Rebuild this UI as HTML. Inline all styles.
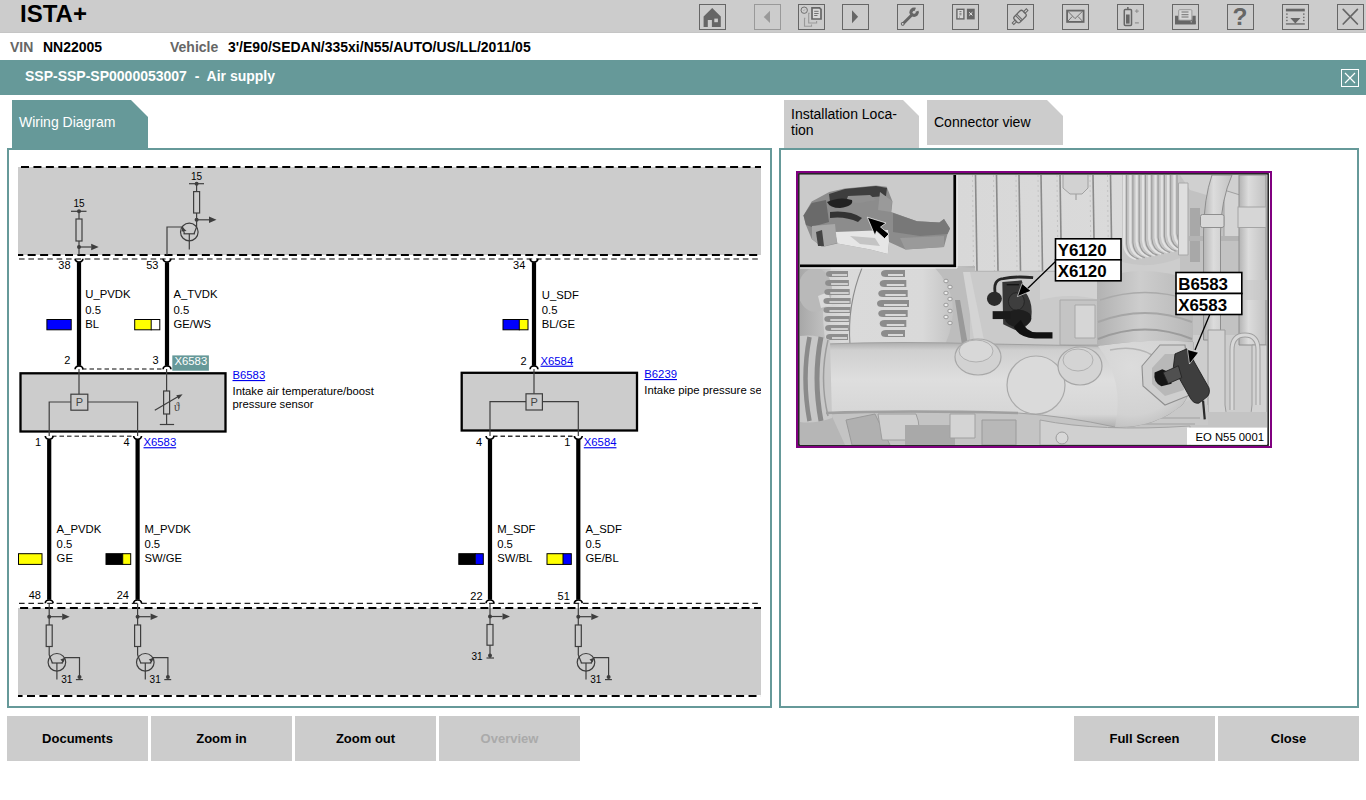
<!DOCTYPE html>
<html><head><meta charset="utf-8">
<style>
html,body{margin:0;padding:0;width:1366px;height:800px;overflow:hidden;background:#fff;font-family:"Liberation Sans",sans-serif;}
.a{position:absolute;white-space:nowrap;}
#hdr{left:0;top:0;width:1366px;height:33px;background:#cccccc;}
#logo{left:20px;top:2px;font:bold 24px/24px "Liberation Sans",sans-serif;color:#000;}
.ib{position:absolute;top:4px;width:25px;height:24px;border:1px solid #666;}
.ib svg{position:absolute;left:0;top:0;}
.vl{font:bold 14px/14px "Liberation Sans",sans-serif;color:#666;top:40px;}
.vv{font:bold 14px/14px "Liberation Sans",sans-serif;color:#000;top:40px;}
#teal{left:0;top:60px;width:1366px;height:35px;background:#669999;}
#ttl{left:25px;top:69px;font:bold 14px/14px "Liberation Sans",sans-serif;color:#fff;}
#cls{left:1341px;top:69px;width:16px;height:16px;border:1px solid #fff;}
.tab{position:absolute;font:14px/16px "Liberation Sans",sans-serif;}
.panel{position:absolute;border:2px solid #669999;background:#fff;}
.btn{position:absolute;top:716px;width:141px;height:45px;background:#cccccc;font:bold 13px/45px "Liberation Sans",sans-serif;text-align:center;color:#000;}
</style></head>
<body>
<div id="hdr" class="a"></div>
<div class="a" style="left:0;top:32px;width:1366px;height:1px;background:#c5c5c5"></div>
<div id="logo" class="a">ISTA+</div>
<svg class="a" style="left:699px;top:4px" width="27" height="26" viewBox="0 0 27 26"><rect x="0.5" y="0.5" width="26" height="25" fill="none" stroke="#666" stroke-width="1"/><path d="M13.2 4L21.8 12.5V23H12.9V16H8.8V23H4.6V12.5Z" fill="#666"/><rect x="15.3" y="14.6" width="3.6" height="3.6" fill="#cccccc"/></svg>
<svg class="a" style="left:754px;top:4px" width="27" height="26" viewBox="0 0 27 26"><rect x="0.5" y="0.5" width="26" height="25" fill="none" stroke="#999" stroke-width="1"/><path d="M9.8 12.9L16 6.8V19.1Z" fill="#999"/></svg>
<svg class="a" style="left:798px;top:4px" width="27" height="26" viewBox="0 0 27 26"><rect x="0.5" y="0.5" width="26" height="25" fill="none" stroke="#666" stroke-width="1"/><circle cx="6.2" cy="6.2" r="3.2" fill="none" stroke="#666" stroke-width="0.9"/>
<path d="M5.4 7L7 5.4" stroke="#999" stroke-width="0.8"/>
<path d="M14 3.8H21.5L23 5.3V15H14Z" fill="#d8d8d8" stroke="#666" stroke-width="1.7"/>
<path d="M16.2 7.3H20.6M16.2 9.5H20.6M16.2 11.5H19.5" stroke="#666" stroke-width="0.9"/>
<path d="M7.3 14.4H6.5V22.2H13.5V20.5" fill="none" stroke="#999" stroke-width="1.1"/>
<path d="M11.7 9.3H10.7V19H18.6V17" fill="none" stroke="#999" stroke-width="1.1"/></svg>
<svg class="a" style="left:842px;top:4px" width="27" height="26" viewBox="0 0 27 26"><rect x="0.5" y="0.5" width="26" height="25" fill="none" stroke="#666" stroke-width="1"/><path d="M10 6.2L16.1 12.8L10 19.3Z" fill="#666"/></svg>
<svg class="a" style="left:897px;top:4px" width="27" height="26" viewBox="0 0 27 26"><rect x="0.5" y="0.5" width="26" height="25" fill="none" stroke="#666" stroke-width="1"/><path d="M6 19.8L14.5 11.3" stroke="#666" stroke-width="3" stroke-linecap="round"/>
<circle cx="17.1" cy="8.3" r="4.7" fill="#666"/>
<path d="M17.1 8.3L19.3 3L22.6 6.3Z" fill="#cccccc"/><circle cx="17.1" cy="8.3" r="1.5" fill="#cccccc"/>
<circle cx="5.7" cy="19.8" r="1.9" fill="#666"/><circle cx="5.7" cy="19.8" r="0.9" fill="#ddd"/></svg>
<svg class="a" style="left:952px;top:4px" width="27" height="26" viewBox="0 0 27 26"><rect x="0.5" y="0.5" width="26" height="25" fill="none" stroke="#666" stroke-width="1"/><rect x="4.9" y="5.3" width="7" height="9.6" fill="#d8d8d8" stroke="#666" stroke-width="1.4"/>
<path d="M7.4 7.5H9.5M7.4 9.3H9.5M7.4 10.8H9.5" stroke="#666" stroke-width="0.8"/><circle cx="7.5" cy="13" r="0.5" fill="#666"/>
<rect x="14.9" y="4.7" width="7.8" height="10.7" fill="#666"/>
<path d="M17.2 8.3L20.4 11.4M20.4 8.3L17.2 11.4" stroke="#eee" stroke-width="1"/></svg>
<svg class="a" style="left:1007px;top:4px" width="27" height="26" viewBox="0 0 27 26"><rect x="0.5" y="0.5" width="26" height="25" fill="none" stroke="#666" stroke-width="1"/><g transform="rotate(-45 13 12.6)"><rect x="7" y="8.6" width="12" height="8" rx="2.2" fill="none" stroke="#666" stroke-width="1.3"/>
<path d="M10.6 8.6V16.6M12.4 8.6V16.6" stroke="#666" stroke-width="1"/>
<rect x="3" y="11.6" width="4" height="2.2" fill="none" stroke="#666" stroke-width="1"/>
<rect x="19" y="11.6" width="4" height="2.2" fill="none" stroke="#666" stroke-width="1"/></g></svg>
<svg class="a" style="left:1062px;top:4px" width="27" height="26" viewBox="0 0 27 26"><rect x="0.5" y="0.5" width="26" height="25" fill="none" stroke="#666" stroke-width="1"/><rect x="5.1" y="6.6" width="16.5" height="11.3" fill="none" stroke="#666" stroke-width="1.8"/>
<path d="M5.8 7.2L13 14.6L20.6 7.2M5.8 17.3L10.2 12.5M20.6 17.3L16 12.5" fill="none" stroke="#666" stroke-width="0.9"/></svg>
<svg class="a" style="left:1117px;top:4px" width="27" height="26" viewBox="0 0 27 26"><rect x="0.5" y="0.5" width="26" height="25" fill="none" stroke="#666" stroke-width="1"/><rect x="7.3" y="5.5" width="7.2" height="16" rx="1" fill="none" stroke="#666" stroke-width="1.5"/>
<rect x="10.1" y="3" width="1.5" height="2" fill="#666"/>
<rect x="9" y="10.5" width="3.6" height="9.1" fill="#666"/>
<path d="M17.9 7.1H21.8M19.85 5.2V9" stroke="#888" stroke-width="0.9"/>
<path d="M17.9 18.9H21.8" stroke="#888" stroke-width="1.1"/></svg>
<svg class="a" style="left:1172px;top:4px" width="27" height="26" viewBox="0 0 27 26"><rect x="0.5" y="0.5" width="26" height="25" fill="none" stroke="#666" stroke-width="1"/><path d="M3 11.8H6.4V18H20.3V11.8H23.7V20.3H3Z" fill="#666"/>
<rect x="6.3" y="13.5" width="14" height="4.5" fill="#666"/>
<rect x="6.7" y="5.7" width="13.2" height="10.5" rx="1" fill="#d8d8d8" stroke="#999" stroke-width="1"/>
<path d="M9.5 8H16.5M9.5 10.7H16.5M9.5 13H16.5" stroke="#666" stroke-width="0.9"/>
<rect x="3" y="16.8" width="20.7" height="3.5" fill="#666"/>
<circle cx="19.2" cy="17.8" r="0.6" fill="#ddd"/></svg>
<svg class="a" style="left:1227px;top:4px" width="27" height="26" viewBox="0 0 27 26"><rect x="0.5" y="0.5" width="26" height="25" fill="none" stroke="#666" stroke-width="1"/><text x="13" y="21.4" text-anchor="middle" font-family='"Liberation Sans",sans-serif' font-weight="bold" font-size="24.5" fill="#666">?</text></svg>
<svg class="a" style="left:1282px;top:4px" width="27" height="26" viewBox="0 0 27 26"><rect x="0.5" y="0.5" width="26" height="25" fill="none" stroke="#666" stroke-width="1"/><rect x="3.9" y="4.7" width="18.9" height="2.7" fill="#666"/>
<rect x="3.9" y="19.3" width="18.9" height="1.3" fill="#666"/>
<path d="M8.3 13.9H18.4L13.35 19.4Z" fill="#666"/>
<g fill="#666"><rect x="4.2" y="9.4" width="1.4" height="1.4"/><rect x="4.2" y="12.7" width="1.4" height="1.4"/><rect x="4.2" y="15.8" width="1.4" height="1.4"/>
<rect x="21.1" y="9.4" width="1.4" height="1.4"/><rect x="21.1" y="12.7" width="1.4" height="1.4"/><rect x="21.1" y="15.8" width="1.4" height="1.4"/></g></svg>
<svg class="a" style="left:1337px;top:4px" width="27" height="26" viewBox="0 0 27 26"><rect x="0.5" y="0.5" width="26" height="25" fill="none" stroke="#666" stroke-width="1"/><path d="M6.2 5.4L20.4 20M20.4 5.4L6.2 20" stroke="#666" stroke-width="1.7" stroke-linecap="round"/></svg>

<div class="a vl" style="left:10px">VIN</div>
<div class="a vv" style="left:43px">NN22005</div>
<div class="a vl" style="left:170px">Vehicle</div>
<div class="a vv" style="left:228px">3'/E90/SEDAN/335xi/N55/AUTO/US/LL/2011/05</div>

<div id="teal" class="a"></div>
<div id="ttl" class="a">SSP-SSP-SP0000053007&nbsp; -&nbsp; Air supply</div>
<div id="cls" class="a"><svg width="16" height="16"><path d="M3 3L13 13M13 3L3 13" stroke="#fff" stroke-width="1.2"/></svg></div>

<!-- tabs -->
<svg class="a" style="left:0;top:0" width="1366" height="150">
  <path d="M12 100H131L148 117V150H12Z" fill="#669999"/>
  <path d="M784 100H903L919 116V148H784Z" fill="#cccccc"/>
  <path d="M927 100H1047L1063 116V145H927Z" fill="#cccccc"/>
</svg>
<div class="a tab" style="left:19px;top:114px;color:#fff">Wiring Diagram</div>
<div class="a tab" style="left:791px;top:106px;color:#000">Installation Loca-<br>tion</div>
<div class="a tab" style="left:934px;top:114px;color:#000">Connector view</div>

<div class="panel" style="left:7px;top:148px;width:761px;height:556px"></div>
<div class="panel" style="left:779px;top:148px;width:576px;height:556px"></div>

<svg class="a" style="left:0;top:0" width="1366" height="800" viewBox="0 0 1366 800">
<defs><clipPath id="dc"><rect x="9" y="150" width="752" height="556"/></clipPath></defs>
<g clip-path="url(#dc)">
<rect x="18" y="167" width="743" height="88" fill="#cccccc"/>
<rect x="18" y="608" width="743" height="87" fill="#cccccc"/>
<line x1="18" y1="167" x2="761" y2="167" stroke="#000" stroke-width="2.1" stroke-dasharray="8 4.44" stroke-dashoffset="-3"/>
<line x1="18" y1="255" x2="761" y2="255" stroke="#000" stroke-width="2.1" stroke-dasharray="8 4.44" stroke-dashoffset="2.76"/>
<line x1="18" y1="608" x2="761" y2="608" stroke="#000" stroke-width="2.1" stroke-dasharray="8 4.44" stroke-dashoffset="-2.1"/>
<line x1="18" y1="696" x2="761" y2="696" stroke="#000" stroke-width="2.1" stroke-dasharray="8 4.44" stroke-dashoffset="3.44"/>
<line x1="19" y1="259" x2="761" y2="259" stroke="#5a5a5a" stroke-width="1.6" stroke-dasharray="5.6 3.8"/>
<line x1="19" y1="603.3" x2="761" y2="603.3" stroke="#222" stroke-width="1.3" stroke-dasharray="5.6 3.8"/>
<line x1="82" y1="369" x2="164" y2="369" stroke="#5a5a5a" stroke-width="1.5" stroke-dasharray="4.5 3"/>
<line x1="52" y1="436.2" x2="134.5" y2="436.2" stroke="#5a5a5a" stroke-width="1.5" stroke-dasharray="4.5 3"/>
<line x1="493" y1="436.2" x2="575" y2="436.2" stroke="#333" stroke-width="1.5" stroke-dasharray="4.5 3"/>
<line x1="79" y1="262.3" x2="79" y2="365.6" stroke="#000" stroke-width="4.2"/>
<path d="M75.1 258.8 A3.9 3.3 0 0 0 82.9 258.8" fill="none" stroke="#000" stroke-width="1.7"/>
<path d="M75.1 369.2 A3.9 3.3 0 0 1 82.9 369.2" fill="none" stroke="#000" stroke-width="1.7"/>
<line x1="167" y1="262.3" x2="167" y2="365.6" stroke="#000" stroke-width="4.2"/>
<path d="M163.1 258.8 A3.9 3.3 0 0 0 170.9 258.8" fill="none" stroke="#000" stroke-width="1.7"/>
<path d="M163.1 369.2 A3.9 3.3 0 0 1 170.9 369.2" fill="none" stroke="#000" stroke-width="1.7"/>
<line x1="534" y1="262.3" x2="534" y2="365.6" stroke="#000" stroke-width="4.2"/>
<path d="M530.1 258.8 A3.9 3.3 0 0 0 537.9 258.8" fill="none" stroke="#000" stroke-width="1.7"/>
<path d="M530.1 369.2 A3.9 3.3 0 0 1 537.9 369.2" fill="none" stroke="#000" stroke-width="1.7"/>
<line x1="49.2" y1="439.5" x2="49.2" y2="599.7" stroke="#000" stroke-width="4.2"/>
<path d="M45.300000000000004 436 A3.9 3.3 0 0 0 53.1 436" fill="none" stroke="#000" stroke-width="1.7"/>
<path d="M45.300000000000004 603.3 A3.9 3.3 0 0 1 53.1 603.3" fill="none" stroke="#000" stroke-width="1.7"/>
<line x1="137.6" y1="439.5" x2="137.6" y2="599.7" stroke="#000" stroke-width="4.2"/>
<path d="M133.7 436 A3.9 3.3 0 0 0 141.5 436" fill="none" stroke="#000" stroke-width="1.7"/>
<path d="M133.7 603.3 A3.9 3.3 0 0 1 141.5 603.3" fill="none" stroke="#000" stroke-width="1.7"/>
<line x1="490" y1="439.5" x2="490" y2="599.7" stroke="#000" stroke-width="4.2"/>
<path d="M486.1 436 A3.9 3.3 0 0 0 493.9 436" fill="none" stroke="#000" stroke-width="1.7"/>
<path d="M486.1 603.3 A3.9 3.3 0 0 1 493.9 603.3" fill="none" stroke="#000" stroke-width="1.7"/>
<line x1="578.3" y1="439.5" x2="578.3" y2="599.7" stroke="#000" stroke-width="4.2"/>
<path d="M574.4 436 A3.9 3.3 0 0 0 582.1999999999999 436" fill="none" stroke="#000" stroke-width="1.7"/>
<path d="M574.4 603.3 A3.9 3.3 0 0 1 582.1999999999999 603.3" fill="none" stroke="#000" stroke-width="1.7"/>
<text x="79" y="207" font-family='"Liberation Sans",sans-serif' font-size="10" text-anchor="middle" fill="#000" >15</text>
<line x1="71" y1="211.3" x2="86.5" y2="211.3" stroke="#3e3e3e" stroke-width="1.2"/>
<circle cx="79" cy="211.3" r="2" fill="#3e3e3e"/>
<line x1="79" y1="211.3" x2="79" y2="255" stroke="#3e3e3e" stroke-width="1.2"/>
<rect x="76.0" y="219" width="6" height="22" fill="#cccccc" stroke="#3e3e3e" stroke-width="1.2"/>
<circle cx="79" cy="247" r="2" fill="#3e3e3e"/>
<line x1="79" y1="247" x2="91.2" y2="247" stroke="#3e3e3e" stroke-width="1.2"/>
<path d="M91.2 243.8L98.7 247L91.2 250.2Z" fill="#3e3e3e"/>
<text x="196.6" y="180" font-family='"Liberation Sans",sans-serif' font-size="10" text-anchor="middle" fill="#000" >15</text>
<line x1="189" y1="183.7" x2="204" y2="183.7" stroke="#3e3e3e" stroke-width="1.2"/>
<circle cx="196.6" cy="183.7" r="2" fill="#3e3e3e"/>
<line x1="196.6" y1="183.7" x2="196.6" y2="227" stroke="#3e3e3e" stroke-width="1.2"/>
<rect x="193.6" y="191.6" width="6" height="21.400000000000006" fill="#cccccc" stroke="#3e3e3e" stroke-width="1.2"/>
<circle cx="196.6" cy="219.8" r="2" fill="#3e3e3e"/>
<line x1="196.6" y1="219.8" x2="209.0" y2="219.8" stroke="#3e3e3e" stroke-width="1.2"/>
<path d="M209.0 216.60000000000002L216.5 219.8L209.0 223.0Z" fill="#3e3e3e"/>
<circle cx="189.3" cy="232" r="8.8" fill="none" stroke="#3e3e3e" stroke-width="1.2"/>
<line x1="183.5" y1="233.8" x2="195" y2="233.8" stroke="#3e3e3e" stroke-width="1.2"/>
<line x1="189.3" y1="233.8" x2="189.3" y2="249.6" stroke="#3e3e3e" stroke-width="1.2"/>
<path d="M194 233.8L196.6 227" fill="none" stroke="#3e3e3e" stroke-width="1.2"/>
<path d="M184.5 233.8L182.5 227L167 227L167 255" fill="none" stroke="#3e3e3e" stroke-width="1.2"/>
<path d="M186.5 231 L182.5 227 L181.5 231.5Z" fill="#3e3e3e"/>
<text x="70.6" y="269" font-family='"Liberation Sans",sans-serif' font-size="11" text-anchor="end" fill="#000" >38</text>
<text x="158.5" y="269" font-family='"Liberation Sans",sans-serif' font-size="11" text-anchor="end" fill="#000" >53</text>
<text x="525.3" y="269" font-family='"Liberation Sans",sans-serif' font-size="11" text-anchor="end" fill="#000" >34</text>
<text x="85.3" y="298" font-family='"Liberation Sans",sans-serif' font-size="11.3" text-anchor="start" fill="#000" >U_PVDK</text>
<text x="85.3" y="313.6" font-family='"Liberation Sans",sans-serif' font-size="11.3" text-anchor="start" fill="#000" >0.5</text>
<text x="85.3" y="328.3" font-family='"Liberation Sans",sans-serif' font-size="11.3" text-anchor="start" fill="#000" >BL</text>
<text x="173.5" y="298" font-family='"Liberation Sans",sans-serif' font-size="11.3" text-anchor="start" fill="#000" >A_TVDK</text>
<text x="173.5" y="313.6" font-family='"Liberation Sans",sans-serif' font-size="11.3" text-anchor="start" fill="#000" >0.5</text>
<text x="173.5" y="328.3" font-family='"Liberation Sans",sans-serif' font-size="11.3" text-anchor="start" fill="#000" >GE/WS</text>
<text x="541.8" y="299" font-family='"Liberation Sans",sans-serif' font-size="11.3" text-anchor="start" fill="#000" >U_SDF</text>
<text x="541.8" y="313.6" font-family='"Liberation Sans",sans-serif' font-size="11.3" text-anchor="start" fill="#000" >0.5</text>
<text x="541.8" y="328.3" font-family='"Liberation Sans",sans-serif' font-size="11.3" text-anchor="start" fill="#000" >BL/GE</text>
<text x="56.6" y="532.7" font-family='"Liberation Sans",sans-serif' font-size="11.3" text-anchor="start" fill="#000" >A_PVDK</text>
<text x="56.6" y="547.8" font-family='"Liberation Sans",sans-serif' font-size="11.3" text-anchor="start" fill="#000" >0.5</text>
<text x="56.6" y="562.4" font-family='"Liberation Sans",sans-serif' font-size="11.3" text-anchor="start" fill="#000" >GE</text>
<text x="144.4" y="532.7" font-family='"Liberation Sans",sans-serif' font-size="11.3" text-anchor="start" fill="#000" >M_PVDK</text>
<text x="144.4" y="547.8" font-family='"Liberation Sans",sans-serif' font-size="11.3" text-anchor="start" fill="#000" >0.5</text>
<text x="144.4" y="562.4" font-family='"Liberation Sans",sans-serif' font-size="11.3" text-anchor="start" fill="#000" >SW/GE</text>
<text x="497.2" y="533.2" font-family='"Liberation Sans",sans-serif' font-size="11.3" text-anchor="start" fill="#000" >M_SDF</text>
<text x="497.2" y="547.8" font-family='"Liberation Sans",sans-serif' font-size="11.3" text-anchor="start" fill="#000" >0.5</text>
<text x="497.2" y="562.4" font-family='"Liberation Sans",sans-serif' font-size="11.3" text-anchor="start" fill="#000" >SW/BL</text>
<text x="585.4" y="533.2" font-family='"Liberation Sans",sans-serif' font-size="11.3" text-anchor="start" fill="#000" >A_SDF</text>
<text x="585.4" y="547.8" font-family='"Liberation Sans",sans-serif' font-size="11.3" text-anchor="start" fill="#000" >0.5</text>
<text x="585.4" y="562.4" font-family='"Liberation Sans",sans-serif' font-size="11.3" text-anchor="start" fill="#000" >GE/BL</text>
<rect x="46.9" y="319.5" width="24.300000000000004" height="10.300000000000011" fill="#0000ff" stroke="#000" stroke-width="1"/>
<rect x="134.7" y="319.5" width="16.5" height="10.300000000000011" fill="#ffff00"/>
<rect x="151.2" y="319.5" width="8.600000000000023" height="10.300000000000011" fill="#ffffff"/>
<rect x="134.7" y="319.5" width="25.100000000000023" height="10.300000000000011" fill="none" stroke="#000" stroke-width="1"/>
<line x1="151.2" y1="319" x2="151.2" y2="330.3" stroke="#000" stroke-width="1"/>
<rect x="503.0" y="319.5" width="16.299999999999955" height="10.300000000000011" fill="#0000ff"/>
<rect x="519.3" y="319.5" width="8.700000000000045" height="10.300000000000011" fill="#ffff00"/>
<rect x="503.0" y="319.5" width="25.0" height="10.300000000000011" fill="none" stroke="#000" stroke-width="1"/>
<line x1="519.3" y1="319" x2="519.3" y2="330.3" stroke="#000" stroke-width="1"/>
<rect x="18.5" y="553.7" width="23.5" height="10.699999999999932" fill="#ffff00" stroke="#000" stroke-width="1"/>
<rect x="106.0" y="553.7" width="16.700000000000003" height="10.699999999999932" fill="#000000"/>
<rect x="122.7" y="553.7" width="7.999999999999986" height="10.699999999999932" fill="#ffff00"/>
<rect x="106.0" y="553.7" width="24.69999999999999" height="10.699999999999932" fill="none" stroke="#000" stroke-width="1"/>
<line x1="122.7" y1="553.2" x2="122.7" y2="564.9" stroke="#000" stroke-width="1"/>
<rect x="458.8" y="553.7" width="16.5" height="10.699999999999932" fill="#000000"/>
<rect x="475.3" y="553.7" width="8.0" height="10.699999999999932" fill="#0000ff"/>
<rect x="458.8" y="553.7" width="24.5" height="10.699999999999932" fill="none" stroke="#000" stroke-width="1"/>
<line x1="475.3" y1="553.2" x2="475.3" y2="564.9" stroke="#000" stroke-width="1"/>
<rect x="547.0" y="553.7" width="16.0" height="10.699999999999932" fill="#ffff00"/>
<rect x="563" y="553.7" width="8.299999999999955" height="10.699999999999932" fill="#0000ff"/>
<rect x="547.0" y="553.7" width="24.299999999999955" height="10.699999999999932" fill="none" stroke="#000" stroke-width="1"/>
<line x1="563" y1="553.2" x2="563" y2="564.9" stroke="#000" stroke-width="1"/>
<text x="70.3" y="364.4" font-family='"Liberation Sans",sans-serif' font-size="11" text-anchor="end" fill="#000" >2</text>
<text x="158.5" y="364.4" font-family='"Liberation Sans",sans-serif' font-size="11" text-anchor="end" fill="#000" >3</text>
<rect x="172.3" y="355.4" width="36.6" height="15.3" fill="#669999"/>
<text x="174.5" y="364.8" font-family='"Liberation Sans",sans-serif' font-size="11.3" text-anchor="start" fill="#fff" >X6583</text>
<text x="526.6" y="364.7" font-family='"Liberation Sans",sans-serif' font-size="11" text-anchor="end" fill="#000" >2</text>
<text x="540.5" y="364.7" font-family='"Liberation Sans",sans-serif' font-size="11.3" text-anchor="start" fill="#0000ee" text-decoration="underline">X6584</text>
<text x="41" y="446.2" font-family='"Liberation Sans",sans-serif' font-size="11" text-anchor="end" fill="#000" >1</text>
<text x="129.5" y="446.2" font-family='"Liberation Sans",sans-serif' font-size="11" text-anchor="end" fill="#000" >4</text>
<text x="143.5" y="446.2" font-family='"Liberation Sans",sans-serif' font-size="11.3" text-anchor="start" fill="#0000ee" text-decoration="underline">X6583</text>
<text x="482" y="446.2" font-family='"Liberation Sans",sans-serif' font-size="11" text-anchor="end" fill="#000" >4</text>
<text x="570.4" y="446.2" font-family='"Liberation Sans",sans-serif' font-size="11" text-anchor="end" fill="#000" >1</text>
<text x="583.8" y="446.2" font-family='"Liberation Sans",sans-serif' font-size="11.3" text-anchor="start" fill="#0000ee" text-decoration="underline">X6584</text>
<text x="41" y="599" font-family='"Liberation Sans",sans-serif' font-size="11" text-anchor="end" fill="#000" >48</text>
<text x="129" y="599" font-family='"Liberation Sans",sans-serif' font-size="11" text-anchor="end" fill="#000" >24</text>
<text x="482.6" y="599.5" font-family='"Liberation Sans",sans-serif' font-size="11" text-anchor="end" fill="#000" >22</text>
<text x="569.8" y="599.5" font-family='"Liberation Sans",sans-serif' font-size="11" text-anchor="end" fill="#000" >51</text>
<rect x="20.5" y="373.3" width="205" height="58.2" fill="#cccccc" stroke="#000" stroke-width="2.3"/>
<rect x="461.7" y="372.8" width="175.3" height="57.7" fill="#cccccc" stroke="#000" stroke-width="2.3"/>
<text x="232.5" y="379" font-family='"Liberation Sans",sans-serif' font-size="11.3" text-anchor="start" fill="#0000ee" text-decoration="underline">B6583</text>
<text x="232.5" y="394.8" font-family='"Liberation Sans",sans-serif' font-size="11.3" text-anchor="start" fill="#000" >Intake air temperature/boost</text>
<text x="232.5" y="408.2" font-family='"Liberation Sans",sans-serif' font-size="11.3" text-anchor="start" fill="#000" >pressure sensor</text>
<text x="644.3" y="378" font-family='"Liberation Sans",sans-serif' font-size="11.3" text-anchor="start" fill="#0000ee" text-decoration="underline">B6239</text>
<text x="644.3" y="393.6" font-family='"Liberation Sans",sans-serif' font-size="11.3" text-anchor="start" fill="#000" >Intake pipe pressure sensor</text>
<line x1="79" y1="369" x2="79" y2="394.2" stroke="#3e3e3e" stroke-width="1.2"/>
<path d="M71 402H49.2V436" fill="none" stroke="#3e3e3e" stroke-width="1.2"/>
<path d="M87.8 402H137.6V436" fill="none" stroke="#3e3e3e" stroke-width="1.2"/>
<rect x="70.9" y="394.2" width="16.89999999999999" height="16.0" fill="#cccccc" stroke="#3e3e3e" stroke-width="1.2"/>
<text x="79.35" y="406.2" font-family='"Liberation Sans",sans-serif' font-size="11" text-anchor="middle" fill="#444" >P</text>
<line x1="166.6" y1="369" x2="166.6" y2="391" stroke="#3e3e3e" stroke-width="1.2"/>
<rect x="163.6" y="391" width="6" height="23" fill="#cccccc" stroke="#3e3e3e" stroke-width="1.2"/>
<line x1="166.6" y1="414" x2="166.6" y2="424.5" stroke="#3e3e3e" stroke-width="1.2"/>
<line x1="159.8" y1="424.5" x2="174.1" y2="424.5" stroke="#3e3e3e" stroke-width="1.2"/>
<line x1="154.8" y1="410.2" x2="180" y2="395.5" stroke="#3e3e3e" stroke-width="1.2"/>
<path d="M182.6 394.2L176.3 395.3L178.6 399.2Z" fill="#3e3e3e"/>
<text x="174" y="411" font-family="Liberation Serif,serif" font-size="11.5" fill="#3e3e3e">&#977;</text>
<line x1="534" y1="369" x2="534" y2="393.8" stroke="#3e3e3e" stroke-width="1.2"/>
<path d="M526 401.7H490V436" fill="none" stroke="#3e3e3e" stroke-width="1.2"/>
<path d="M542.4 401.7H578.3V436" fill="none" stroke="#3e3e3e" stroke-width="1.2"/>
<rect x="526" y="393.8" width="16.399999999999977" height="16.19999999999999" fill="#cccccc" stroke="#3e3e3e" stroke-width="1.2"/>
<text x="534.2" y="406" font-family='"Liberation Sans",sans-serif' font-size="11" text-anchor="middle" fill="#444" >P</text>
<line x1="49.2" y1="603.5" x2="49.2" y2="655" stroke="#3e3e3e" stroke-width="1.2"/>
<circle cx="49.2" cy="616.7" r="2" fill="#3e3e3e"/>
<line x1="49.2" y1="616.7" x2="62.2" y2="616.7" stroke="#3e3e3e" stroke-width="1.2"/>
<path d="M62.2 613.5L69.7 616.7L62.2 619.9000000000001Z" fill="#3e3e3e"/>
<rect x="46.2" y="625" width="6" height="21.5" fill="#cccccc" stroke="#3e3e3e" stroke-width="1.2"/>
<circle cx="56.900000000000006" cy="662.3" r="8.8" fill="none" stroke="#3e3e3e" stroke-width="1.2"/>
<line x1="51.7" y1="663" x2="62.900000000000006" y2="663" stroke="#3e3e3e" stroke-width="1.2"/>
<line x1="56.900000000000006" y1="663" x2="56.900000000000006" y2="679.6" stroke="#3e3e3e" stroke-width="1.2"/>
<path d="M52.400000000000006 663L49.2 655" fill="none" stroke="#3e3e3e" stroke-width="1.2"/>
<path d="M61.900000000000006 663L64.9 657.7H79.5V677" fill="none" stroke="#3e3e3e" stroke-width="1.2"/>
<path d="M64.9 657.7L60.400000000000006 659.5L63.400000000000006 662.5Z" fill="#3e3e3e"/>
<circle cx="79.5" cy="677" r="2" fill="#3e3e3e"/>
<line x1="75.9" y1="679.6" x2="82.80000000000001" y2="679.6" stroke="#3e3e3e" stroke-width="1.2"/>
<text x="61.2" y="682.6" font-family='"Liberation Sans",sans-serif' font-size="10" text-anchor="start" fill="#000" >31</text>
<line x1="137.6" y1="603.5" x2="137.6" y2="655" stroke="#3e3e3e" stroke-width="1.2"/>
<circle cx="137.6" cy="616.7" r="2" fill="#3e3e3e"/>
<line x1="137.6" y1="616.7" x2="150.6" y2="616.7" stroke="#3e3e3e" stroke-width="1.2"/>
<path d="M150.6 613.5L158.1 616.7L150.6 619.9000000000001Z" fill="#3e3e3e"/>
<rect x="134.6" y="625" width="6" height="21.5" fill="#cccccc" stroke="#3e3e3e" stroke-width="1.2"/>
<circle cx="145.29999999999998" cy="662.3" r="8.8" fill="none" stroke="#3e3e3e" stroke-width="1.2"/>
<line x1="140.1" y1="663" x2="151.29999999999998" y2="663" stroke="#3e3e3e" stroke-width="1.2"/>
<line x1="145.29999999999998" y1="663" x2="145.29999999999998" y2="679.6" stroke="#3e3e3e" stroke-width="1.2"/>
<path d="M140.79999999999998 663L137.6 655" fill="none" stroke="#3e3e3e" stroke-width="1.2"/>
<path d="M150.29999999999998 663L153.29999999999998 657.7H167.9V677" fill="none" stroke="#3e3e3e" stroke-width="1.2"/>
<path d="M153.29999999999998 657.7L148.79999999999998 659.5L151.79999999999998 662.5Z" fill="#3e3e3e"/>
<circle cx="167.9" cy="677" r="2" fill="#3e3e3e"/>
<line x1="164.29999999999998" y1="679.6" x2="171.2" y2="679.6" stroke="#3e3e3e" stroke-width="1.2"/>
<text x="149.6" y="682.6" font-family='"Liberation Sans",sans-serif' font-size="10" text-anchor="start" fill="#000" >31</text>
<line x1="578.3" y1="603.5" x2="578.3" y2="655" stroke="#3e3e3e" stroke-width="1.2"/>
<circle cx="578.3" cy="616.7" r="2" fill="#3e3e3e"/>
<line x1="578.3" y1="616.7" x2="591.3" y2="616.7" stroke="#3e3e3e" stroke-width="1.2"/>
<path d="M591.3 613.5L598.8 616.7L591.3 619.9000000000001Z" fill="#3e3e3e"/>
<rect x="575.3" y="625" width="6" height="21.5" fill="#cccccc" stroke="#3e3e3e" stroke-width="1.2"/>
<circle cx="586.0" cy="662.3" r="8.8" fill="none" stroke="#3e3e3e" stroke-width="1.2"/>
<line x1="580.8" y1="663" x2="592.0" y2="663" stroke="#3e3e3e" stroke-width="1.2"/>
<line x1="586.0" y1="663" x2="586.0" y2="679.6" stroke="#3e3e3e" stroke-width="1.2"/>
<path d="M581.5 663L578.3 655" fill="none" stroke="#3e3e3e" stroke-width="1.2"/>
<path d="M591.0 663L594.0 657.7H608.5999999999999V677" fill="none" stroke="#3e3e3e" stroke-width="1.2"/>
<path d="M594.0 657.7L589.5 659.5L592.5 662.5Z" fill="#3e3e3e"/>
<circle cx="608.5999999999999" cy="677" r="2" fill="#3e3e3e"/>
<line x1="605.0" y1="679.6" x2="611.9" y2="679.6" stroke="#3e3e3e" stroke-width="1.2"/>
<text x="590.3" y="682.6" font-family='"Liberation Sans",sans-serif' font-size="10" text-anchor="start" fill="#000" >31</text>
<line x1="490" y1="603.5" x2="490" y2="658" stroke="#3e3e3e" stroke-width="1.2"/>
<circle cx="490" cy="616.5" r="2" fill="#3e3e3e"/>
<line x1="490" y1="616.5" x2="502.5" y2="616.5" stroke="#3e3e3e" stroke-width="1.2"/>
<path d="M502.5 613.3L510 616.5L502.5 619.7Z" fill="#3e3e3e"/>
<rect x="487.0" y="624.5" width="6" height="20.700000000000045" fill="#cccccc" stroke="#3e3e3e" stroke-width="1.2"/>
<circle cx="490" cy="655.4" r="2" fill="#3e3e3e"/>
<line x1="486.5" y1="658" x2="494" y2="658" stroke="#3e3e3e" stroke-width="1.2"/>
<text x="482.6" y="659.5" font-family='"Liberation Sans",sans-serif' font-size="10" text-anchor="end" fill="#000" >31</text>
</g></svg>
<svg class="a" style="left:0;top:0" width="1366" height="800" viewBox="0 0 1366 800">
<defs>
<clipPath id="pc"><rect x="800" y="175" width="467" height="270"/></clipPath>
<linearGradient id="pipeg" x1="0" y1="0" x2="0" y2="1">
 <stop offset="0" stop-color="#a9a9a9"/><stop offset="0.1" stop-color="#cfcfcf"/>
 <stop offset="0.45" stop-color="#dedede"/><stop offset="0.85" stop-color="#d6d6d6"/><stop offset="1" stop-color="#b0b0b0"/>
</linearGradient>
<radialGradient id="elbowg" cx="0.35" cy="0.3" r="0.8">
 <stop offset="0" stop-color="#dcdcdc"/><stop offset="0.7" stop-color="#d2d2d2"/><stop offset="1" stop-color="#bababa"/>
</radialGradient>
<linearGradient id="neckg" x1="0" y1="0" x2="1" y2="0">
 <stop offset="0" stop-color="#b2b2b2"/><stop offset="0.45" stop-color="#cdcdcd"/><stop offset="1" stop-color="#b8b8b8"/>
</linearGradient>
<linearGradient id="altg" x1="0" y1="0" x2="1" y2="0">
 <stop offset="0" stop-color="#c8c8c8"/><stop offset="0.25" stop-color="#dadada"/><stop offset="0.7" stop-color="#d9d9d9"/><stop offset="1" stop-color="#b4b4b4"/>
</linearGradient>
<linearGradient id="hoseg" x1="0" y1="0" x2="1" y2="0">
 <stop offset="0" stop-color="#b4b4b4"/><stop offset="0.35" stop-color="#dcdcdc"/><stop offset="1" stop-color="#c2c2c2"/>
</linearGradient>
<linearGradient id="ribg" x1="0" y1="0" x2="1" y2="0">
 <stop offset="0" stop-color="#d8d8d8"/><stop offset="1" stop-color="#dadada"/>
</linearGradient>
<linearGradient id="altl" x1="0" y1="0" x2="1" y2="0">
 <stop offset="0" stop-color="#a8a8a8"/><stop offset="1" stop-color="#c8c8c8"/>
</linearGradient>
</defs>
<rect x="797" y="172" width="474" height="275" fill="none" stroke="#800080" stroke-width="2"/>
<rect x="798.8" y="173.8" width="469.4" height="271.4" fill="#d0d0d0" stroke="#111" stroke-width="1.4"/>
<g clip-path="url(#pc)">
<rect x="800" y="175" width="467" height="270" fill="#cdcdcd"/>
<rect x="954" y="175" width="172" height="97" fill="url(#ribg)"/>
<line x1="975.5" y1="175" x2="977.0" y2="271" stroke="#8a8a8a" stroke-width="1.6"/>
<line x1="972.5" y1="175" x2="973.5" y2="271" stroke="#c4c4c4" stroke-width="1" stroke-dasharray="2 3"/>
<line x1="996.5" y1="175" x2="998.0" y2="271" stroke="#8a8a8a" stroke-width="1.6"/>
<line x1="993.5" y1="175" x2="994.5" y2="271" stroke="#c4c4c4" stroke-width="1" stroke-dasharray="2 3"/>
<line x1="1019" y1="175" x2="1020.5" y2="271" stroke="#8a8a8a" stroke-width="1.6"/>
<line x1="1016" y1="175" x2="1017" y2="271" stroke="#c4c4c4" stroke-width="1" stroke-dasharray="2 3"/>
<line x1="1041" y1="175" x2="1042.5" y2="271" stroke="#8a8a8a" stroke-width="1.6"/>
<line x1="1038" y1="175" x2="1039" y2="271" stroke="#c4c4c4" stroke-width="1" stroke-dasharray="2 3"/>
<line x1="1060" y1="175" x2="1061.5" y2="271" stroke="#8a8a8a" stroke-width="1.6"/>
<line x1="1057" y1="175" x2="1058" y2="271" stroke="#c4c4c4" stroke-width="1" stroke-dasharray="2 3"/>
<line x1="1093" y1="175" x2="1094.5" y2="271" stroke="#8a8a8a" stroke-width="1.6"/>
<line x1="1090" y1="175" x2="1091" y2="271" stroke="#c4c4c4" stroke-width="1" stroke-dasharray="2 3"/>
<line x1="1110.5" y1="175" x2="1112.0" y2="271" stroke="#8a8a8a" stroke-width="1.6"/>
<line x1="1107.5" y1="175" x2="1108.5" y2="271" stroke="#c4c4c4" stroke-width="1" stroke-dasharray="2 3"/>
<line x1="954" y1="271.5" x2="1126" y2="271.5" stroke="#b8b8b8" stroke-width="1.5"/>
<path d="M1063 175V188L1070 194H1082L1088 188V175" fill="#d2d2d2" stroke="#a0a0a0" stroke-width="1"/>
<line x1="1076" y1="194" x2="1076" y2="200" stroke="#a0a0a0" stroke-width="1.2"/>
<rect x="1122" y="175" width="58" height="92" fill="#c6c6c6"/>
<path d="M1124.0 175V244.0Q1125.0 256.0 1136.0 259.0" fill="none" stroke="#e2e2e2" stroke-width="2.2"/>
<path d="M1126.6 175V244.0Q1127.6 256.0 1138.6 259.0" fill="none" stroke="#9a9a9a" stroke-width="1.1"/>
<path d="M1130.3 175V242.7Q1131.3 254.7 1142.3 257.7" fill="none" stroke="#e2e2e2" stroke-width="2.2"/>
<path d="M1132.9 175V242.7Q1133.9 254.7 1144.9 257.7" fill="none" stroke="#9a9a9a" stroke-width="1.1"/>
<path d="M1136.6 175V241.4Q1137.6 253.4 1148.6 256.4" fill="none" stroke="#e2e2e2" stroke-width="2.2"/>
<path d="M1139.2 175V241.4Q1140.2 253.4 1151.2 256.4" fill="none" stroke="#9a9a9a" stroke-width="1.1"/>
<path d="M1142.9 175V240.1Q1143.9 252.1 1154.9 255.1" fill="none" stroke="#e2e2e2" stroke-width="2.2"/>
<path d="M1145.5 175V240.1Q1146.5 252.1 1157.5 255.1" fill="none" stroke="#9a9a9a" stroke-width="1.1"/>
<path d="M1149.2 175V238.8Q1150.2 250.8 1161.2 253.8" fill="none" stroke="#e2e2e2" stroke-width="2.2"/>
<path d="M1151.8 175V238.8Q1152.8 250.8 1163.8 253.8" fill="none" stroke="#9a9a9a" stroke-width="1.1"/>
<path d="M1155.5 175V237.5Q1156.5 249.5 1167.5 252.5" fill="none" stroke="#e2e2e2" stroke-width="2.2"/>
<path d="M1158.1 175V237.5Q1159.1 249.5 1170.1 252.5" fill="none" stroke="#9a9a9a" stroke-width="1.1"/>
<path d="M1161.8 175V236.2Q1162.8 248.2 1173.8 251.2" fill="none" stroke="#e2e2e2" stroke-width="2.2"/>
<path d="M1164.4 175V236.2Q1165.4 248.2 1176.4 251.2" fill="none" stroke="#9a9a9a" stroke-width="1.1"/>
<path d="M1168.1 175V234.9Q1169.1 246.9 1180.1 249.9" fill="none" stroke="#e2e2e2" stroke-width="2.2"/>
<path d="M1170.7 175V234.9Q1171.7 246.9 1182.7 249.9" fill="none" stroke="#9a9a9a" stroke-width="1.1"/>
<path d="M1174.4 175V233.6Q1175.4 245.6 1186.4 248.6" fill="none" stroke="#e2e2e2" stroke-width="2.2"/>
<path d="M1177.0 175V233.6Q1178.0 245.6 1189.0 248.6" fill="none" stroke="#9a9a9a" stroke-width="1.1"/>
<path d="M1122 262Q1150 270 1180 258V275H1122Z" fill="#cdcdcd"/>
<rect x="1180" y="175" width="87" height="160" fill="#c2c2c2"/>
<path d="M1180 175H1267V200L1240 205L1190 190Z" fill="#d0d0d0"/>
<path d="M1178.5 183H1188V255H1178.5Z" fill="#dedede" stroke="#a8a8a8" stroke-width="1"/>
<path d="M1190 208H1200V262H1190Z" fill="#a8a8a8"/>
<path d="M1224 190L1240 195V240H1224Z" fill="#d4d4d4" stroke="#a0a0a0" stroke-width="1"/>
<path d="M1188 236H1240V241H1188Z" fill="#b4b4b4"/>
<path d="M1203.5 340V232Q1204 198 1212 175H1232Q1221 200 1220.5 232V340Z" fill="url(#hoseg)" stroke="#8e8e8e" stroke-width="1"/>
<rect x="1200.5" y="214.5" width="23.5" height="13" rx="2" fill="#d8d8d8" stroke="#8e8e8e" stroke-width="1"/>
<path d="M1239 345V175H1266V345Z" fill="url(#hoseg)" stroke="#8e8e8e" stroke-width="1"/>
<rect x="1238" y="207" width="28" height="20.5" fill="#d6d6d6" stroke="#a4a4a4" stroke-width="1"/>
<path d="M1185 280H1267V300H1185Z" fill="#c8c8c8" opacity="0.6"/>
<path d="M1208 425V330H1225V405Q1225 420 1240 420Q1252 420 1252 405V345H1267V425Z" fill="#d2d2d2" stroke="#9c9c9c" stroke-width="1"/>
<path d="M1232 410V350Q1232 335 1245 335Q1258 335 1258 350V405" fill="none" stroke="#a0a0a0" stroke-width="5"/>
<path d="M1232 410V350Q1232 335 1245 335Q1258 335 1258 350V405" fill="none" stroke="#d8d8d8" stroke-width="3"/>
<rect x="800" y="266" width="175" height="82" fill="url(#altg)"/>
<path d="M800 266H832Q818 300 826 345H800Z" fill="url(#altl)"/>
<ellipse cx="815" cy="290" rx="17" ry="22" fill="#b9b9b9"/>
<path d="M818 296L828 292L832 305L821 308Z" fill="#dadada"/>
<path d="M848.0 271H830.0Q826.0 271 826.0 274Q826.0 277 830.0 277H848.0Z" fill="#8e8e8e"/>
<path d="M847.0 275H832.0" stroke="#e6e6e6" stroke-width="1.5"/>
<path d="M848.9 280H829.1Q825.1 280 825.1 283Q825.1 286 829.1 286H848.9Z" fill="#8e8e8e"/>
<path d="M847.9 284H831.1" stroke="#e6e6e6" stroke-width="1.5"/>
<path d="M849.7 289H828.3Q824.3 289 824.3 292Q824.3 295 828.3 295H849.7Z" fill="#8e8e8e"/>
<path d="M848.7 293H830.3" stroke="#e6e6e6" stroke-width="1.5"/>
<path d="M850.6 298H827.4Q823.4 298 823.4 301Q823.4 304 827.4 304H850.6Z" fill="#8e8e8e"/>
<path d="M849.6 302H829.4" stroke="#e6e6e6" stroke-width="1.5"/>
<path d="M850.6 307H827.4Q823.4 307 823.4 310Q823.4 313 827.4 313H850.6Z" fill="#8e8e8e"/>
<path d="M849.6 311H829.4" stroke="#e6e6e6" stroke-width="1.5"/>
<path d="M849.7 316H828.3Q824.3 316 824.3 319Q824.3 322 828.3 322H849.7Z" fill="#8e8e8e"/>
<path d="M848.7 320H830.3" stroke="#e6e6e6" stroke-width="1.5"/>
<path d="M848.9 325H829.1Q825.1 325 825.1 328Q825.1 331 829.1 331H848.9Z" fill="#8e8e8e"/>
<path d="M847.9 329H831.1" stroke="#e6e6e6" stroke-width="1.5"/>
<path d="M848.0 334H830.0Q826.0 334 826.0 337Q826.0 340 830.0 340H848.0Z" fill="#8e8e8e"/>
<path d="M847.0 338H832.0" stroke="#e6e6e6" stroke-width="1.5"/>
<path d="M862 268Q847 305 850 345" fill="none" stroke="#8a8a8a" stroke-width="1.1"/>
<path d="M905.0 270H886.0Q881.0 270 881.0 273.5Q881.0 277 886.0 277H905.0Z" fill="#8c8c8c"/>
<path d="M903.0 275H888.0" stroke="#e2e2e2" stroke-width="1.8"/>
<path d="M906.3 280H884.7Q879.7 280 879.7 283.5Q879.7 287 884.7 287H906.3Z" fill="#8c8c8c"/>
<path d="M904.3 285H886.7" stroke="#e2e2e2" stroke-width="1.8"/>
<path d="M907.7 290H883.3Q878.3 290 878.3 293.5Q878.3 297 883.3 297H907.7Z" fill="#8c8c8c"/>
<path d="M905.7 295H885.3" stroke="#e2e2e2" stroke-width="1.8"/>
<path d="M909.0 300H882.0Q877.0 300 877.0 303.5Q877.0 307 882.0 307H909.0Z" fill="#8c8c8c"/>
<path d="M907.0 305H884.0" stroke="#e2e2e2" stroke-width="1.8"/>
<path d="M907.7 310H883.3Q878.3 310 878.3 313.5Q878.3 317 883.3 317H907.7Z" fill="#8c8c8c"/>
<path d="M905.7 315H885.3" stroke="#e2e2e2" stroke-width="1.8"/>
<path d="M906.3 320H884.7Q879.7 320 879.7 323.5Q879.7 327 884.7 327H906.3Z" fill="#8c8c8c"/>
<path d="M904.3 325H886.7" stroke="#e2e2e2" stroke-width="1.8"/>
<path d="M905.0 330H886.0Q881.0 330 881.0 333.5Q881.0 337 886.0 337H905.0Z" fill="#8c8c8c"/>
<path d="M903.0 335H888.0" stroke="#e2e2e2" stroke-width="1.8"/>
<path d="M935 268Q965 300 945 345H975V268Z" fill="#bdbdbd"/>
<ellipse cx="946" cy="281" rx="2.2" ry="1.8" fill="#ececec" stroke="#8c8c8c" stroke-width="0.8"/>
<ellipse cx="950" cy="287" rx="2.2" ry="1.8" fill="#ececec" stroke="#8c8c8c" stroke-width="0.8"/>
<ellipse cx="946" cy="293" rx="2.2" ry="1.8" fill="#ececec" stroke="#8c8c8c" stroke-width="0.8"/>
<ellipse cx="950" cy="299" rx="2.2" ry="1.8" fill="#ececec" stroke="#8c8c8c" stroke-width="0.8"/>
<ellipse cx="946" cy="305" rx="2.2" ry="1.8" fill="#ececec" stroke="#8c8c8c" stroke-width="0.8"/>
<ellipse cx="950" cy="311" rx="2.2" ry="1.8" fill="#ececec" stroke="#8c8c8c" stroke-width="0.8"/>
<ellipse cx="946" cy="317" rx="2.2" ry="1.8" fill="#ececec" stroke="#8c8c8c" stroke-width="0.8"/>
<ellipse cx="950" cy="323" rx="2.2" ry="1.8" fill="#ececec" stroke="#8c8c8c" stroke-width="0.8"/>
<path d="M955 300L962 345H968L960 300Z" fill="#999"/>
<rect x="970" y="272" width="130" height="73" fill="#cacaca"/>
<path d="M970 272L985 345H975L963 272Z" fill="#d4d4d4"/>
<path d="M1040 272H1100V300Q1070 292 1040 300Z" fill="#d2d2d2"/>
<path d="M1060 300H1100V345H1060Z" fill="#c4c4c4" stroke="#a8a8a8" stroke-width="1"/>
<path d="M1075 305L1095 305V338H1075Z" fill="#d6d6d6" stroke="#a8a8a8" stroke-width="1"/>
<circle cx="1093" cy="351" r="4" fill="#c0c0c0" stroke="#999" stroke-width="1"/>
<path d="M1097 345V280Q1140 262 1193 280V345Z" fill="url(#neckg)"/>
<path d="M1100 300Q1145 285 1190 300" fill="none" stroke="#aaa" stroke-width="1.5"/>
<path d="M1098 322Q1145 304 1192 322" fill="none" stroke="#a6a6a6" stroke-width="2"/>
<path d="M1098 339Q1145 320 1192 339" fill="none" stroke="#9c9c9c" stroke-width="2"/>
<rect x="800" y="412" width="467" height="33" fill="#c4c4c4"/>
<path d="M800 418L830 412L845 445H800Z" fill="#b6b6b6"/>
<path d="M846 420L875 414L890 445H852Z" fill="#b0b0b0" stroke="#9a9a9a" stroke-width="1"/>
<path d="M878 414H916Q922 428 916 440H882Z" fill="#cfcfcf" stroke="#9e9e9e" stroke-width="1"/>
<path d="M905 425H955V445H905Z" fill="#a9a9a9"/>
<path d="M950 414H975V438H950Z" fill="#d4d4d4" stroke="#a0a0a0" stroke-width="1"/>
<path d="M982 420H1016V445H982Z" fill="#b8b8b8" stroke="#9a9a9a" stroke-width="1"/>
<path d="M1040 420Q1100 432 1190 426V445H1040Z" fill="#d0d0d0" stroke="#a4a4a4" stroke-width="1"/>
<path d="M1110 413Q1160 414 1190 400L1208 405V425H1110Z" fill="#c8c8c8"/>
<path d="M1120 418H1200M1125 424H1195" stroke="#a0a0a0" stroke-width="1"/>
<circle cx="1062" cy="438" r="6" fill="#d8d8d8" stroke="#9c9c9c" stroke-width="1"/>
<path d="M826 344Q900 341 990 344L1100 346Q1140 340 1193 342Q1197 385 1182 405Q1155 428 1115 427Q1065 416 1018 413L960 412Q880 411 826 414Z" fill="url(#pipeg)" stroke="#a0a0a0" stroke-width="1"/>
<path d="M1098 346Q1150 338 1193 342Q1197 385 1182 405Q1155 428 1115 427Q1125 380 1098 346Z" fill="url(#elbowg)"/>
<path d="M1110 350Q1135 345 1152 355" fill="none" stroke="#b5b5b5" stroke-width="1.5"/>
<path d="M800 336Q815 334 830 340L832 418Q815 424 800 422Z" fill="#c8c8c8"/>
<path d="M809.5 337Q801.5 378 809.5 421" fill="none" stroke="#8a8a8a" stroke-width="4.5"/>
<path d="M821 337Q813 378 821 421" fill="none" stroke="#8a8a8a" stroke-width="5"/>
<path d="M828 340Q819 378 828 416" fill="none" stroke="#9c9c9c" stroke-width="1.5"/>
<path d="M826 413Q900 410 1018 413" fill="none" stroke="#a0a0a0" stroke-width="2.5"/>
<ellipse cx="978" cy="357" rx="23" ry="18" fill="#d2d2d2" stroke="#a8a8a8" stroke-width="1.2"/>
<ellipse cx="976" cy="351" rx="17" ry="11" fill="#d8d8d8" stroke="#b0b0b0" stroke-width="1"/>
<circle cx="1036" cy="385" r="29" fill="#dadada" stroke="#aaaaaa" stroke-width="1.2"/>
<ellipse cx="1080" cy="366" rx="22" ry="19" fill="#d4d4d4" stroke="#a6a6a6" stroke-width="1.2"/>
<ellipse cx="1078" cy="360" rx="15" ry="11" fill="none" stroke="#b0b0b0" stroke-width="1"/>
<path d="M1142 366L1160 345H1185L1190 395L1165 405L1143 386Z" fill="#cfcfcf" stroke="#8f8f8f" stroke-width="1.1"/>
<path d="M1152 368L1165 354H1180L1184 390L1165 396L1152 384Z" fill="#b8b8b8"/>
<g transform="translate(1012 305) scale(0.88) translate(-1012 -305)">
<path d="M993 292Q990 276 1002 275Q1016 272 1036 274" fill="none" stroke="#262626" stroke-width="3.2"/>
<ellipse cx="992" cy="298" rx="8.5" ry="8" fill="#2a2a2a"/>
<path d="M1001 279L1023 277L1027 290Q1036 302 1034 318Q1031 333 1015 333L1002 327Z" fill="#363636"/>
<path d="M1006 282H1020" stroke="#0e0e0e" stroke-width="1.3"/>
<ellipse cx="1017" cy="301" rx="9" ry="10" fill="#3e3e3e" stroke="#222" stroke-width="1"/>
<ellipse cx="1019" cy="320" rx="15" ry="10" fill="#1e1e1e"/>
<path d="M990 312H1010V321H990Z" fill="#1a1a1a"/>
<path d="M1022 322Q1028 336 1040 336H1058V343H1038Q1020 342 1014 330Z" fill="#111"/>
</g>
<g transform="translate(1192 376) scale(0.85) translate(-1192 -376)">
<path d="M1172 350L1186 344L1212 390Q1214 398 1208 402L1200 408Q1194 409 1190 402L1170 366Z" fill="#3e3e3e" stroke="#1a1a1a" stroke-width="1"/>
<path d="M1148 372Q1146 384 1156 388L1168 385L1166 372L1157 368Z" fill="#161616"/>
<path d="M1158 372L1176 364L1180 378L1164 385Z" fill="#505050" stroke="#222" stroke-width="1"/>
<line x1="1205" y1="405" x2="1207" y2="427" stroke="#2a2a2a" stroke-width="2.6"/>
</g>
</g>
<rect x="800" y="175" width="154" height="90" fill="#cbcbcb"/>
<path d="M954.8 175V265.8H800" fill="none" stroke="#000" stroke-width="2.8"/>
<path d="M957 175V268H800" fill="none" stroke="#f4f4f4" stroke-width="1"/>
<path d="M803.5 215.5L811.7 201.4L829.3 192L844.5 188.5L876 185.6L886.7 186.8L892.5 201.4L891.3 212L917 221.3L939.4 222.5L944 219L950 228.4L947.5 234L944 247L905.4 249.4L889 242L887.8 254L870.3 249.4L837.5 243.6L822.2 247L811.7 239L805.8 224.8Z" fill="#8c8c8c"/>
<path d="M829 194L845 189L876 186L887 188L886 196L860 198L840 200L830 202Z" fill="#3e3e3e"/>
<path d="M848 196L870 195L876 200L860 203L846 202Z" fill="#909090"/>
<path d="M827 202Q840 196 852 200Q854 206 840 208Q830 208 827 202Z" fill="#222"/>
<path d="M803.5 215.5L811.7 203L826 200L829 222L812 227L806 225Z" fill="#6a6a6a"/>
<path d="M830 212Q850 210 862 218L858 222Q845 216 830 218Z" fill="#333"/>
<path d="M835 232L888 230L889 242L887.8 254L870.3 249.4L837.5 243.6Z" fill="#e6e6e6"/>
<path d="M850 236L875 238L880 246L860 244Z" fill="#c4c4c4"/>
<path d="M812 226L835 224L837 243L822 247L812 239Z" fill="#a8a8a8"/>
<path d="M816 232L822 230L824 246L818 246Z" fill="#444"/>
<path d="M893 213L917 221.3L939.4 222.5L944 219L950 228.4L947.5 234L920 236L893 232Z" fill="#787878"/>
<path d="M900 238L944 236L944 247L905.4 249.4Z" fill="#9a9a9a"/>
<path d="M880 192L892 201L891 212L878 210Z" fill="#9a9a9a"/>
<path d="M867.3 217.2L886 223L880.5 227L889 234L884.5 238.5L876.5 231.2L875 235.5Z" fill="#000" stroke="#fff" stroke-width="0.7"/>
<line x1="1056" y1="261" x2="1025" y2="291" stroke="#000" stroke-width="1.3"/>
<path d="M1017.4 296.6L1022 283.5L1031 291Z" fill="#000" stroke="#fff" stroke-width="0.6"/>
<line x1="1210" y1="314" x2="1195" y2="350" stroke="#000" stroke-width="1.3"/>
<path d="M1189.5 364L1187.5 349.5L1198.5 352.5Z" fill="#000" stroke="#fff" stroke-width="0.6"/>
<rect x="1055.5" y="238.8" width="65.5" height="21.0" fill="#fff" stroke="#000" stroke-width="1.6"/>
<text x="1057.7" y="255.8" font-family='"Liberation Sans",sans-serif' font-weight="bold" font-size="16.9" fill="#000">Y6120</text>
<rect x="1055.5" y="259.8" width="65.5" height="21.0" fill="#fff" stroke="#000" stroke-width="1.6"/>
<text x="1057.7" y="276.8" font-family='"Liberation Sans",sans-serif' font-weight="bold" font-size="16.9" fill="#000">X6120</text>
<rect x="1176" y="272.5" width="65.79999999999995" height="21.0" fill="#fff" stroke="#000" stroke-width="1.6"/>
<text x="1178.2" y="289.5" font-family='"Liberation Sans",sans-serif' font-weight="bold" font-size="16.9" fill="#000">B6583</text>
<rect x="1176" y="293.5" width="65.79999999999995" height="21.0" fill="#fff" stroke="#000" stroke-width="1.6"/>
<text x="1178.2" y="310.5" font-family='"Liberation Sans",sans-serif' font-weight="bold" font-size="16.9" fill="#000">X6583</text>
<rect x="1187" y="427.6" width="80" height="17" fill="#fff"/>
<text x="1195.5" y="440.8" font-family='"Liberation Sans",sans-serif' font-size="11.3" fill="#000">EO N55 0001</text>
</svg>

<div class="btn" style="left:7px">Documents</div>
<div class="btn" style="left:151px">Zoom in</div>
<div class="btn" style="left:295px">Zoom out</div>
<div class="btn" style="left:439px;color:#aaaaaa">Overview</div>
<div class="btn" style="left:1074px">Full Screen</div>
<div class="btn" style="left:1218px">Close</div>
</body></html>
